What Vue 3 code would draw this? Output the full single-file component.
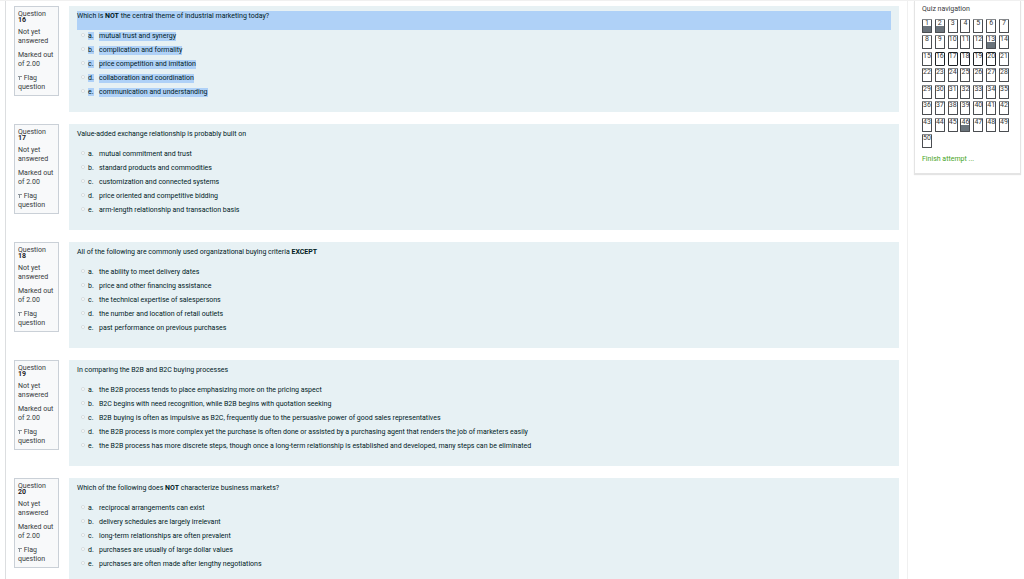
<script setup>
const questions = [
  {
    n: 16,
    selected: true,
    text: ['Which is ', 'NOT', ' the central theme of industrial marketing today?'],
    options: [
      'mutual trust and synergy',
      'complication and formality',
      'price competition and imitation',
      'collaboration and coordination',
      'communication and understanding'
    ]
  },
  {
    n: 17,
    text: ['Value-added exchange relationship is probably built on', '', ''],
    options: [
      'mutual commitment and trust',
      'standard products and commodities',
      'customization and connected systems',
      'price oriented and competitive bidding',
      'arm-length relationship and transaction basis'
    ]
  },
  {
    n: 18,
    text: ['All of the following are commonly used organizational buying criteria ', 'EXCEPT', ''],
    options: [
      'the ability to meet delivery dates',
      'price and other financing assistance',
      'the technical expertise of salespersons',
      'the number and location of retail outlets',
      'past performance on previous purchases'
    ]
  },
  {
    n: 19,
    text: ['In comparing the B2B and B2C buying processes', '', ''],
    options: [
      'the B2B process tends to place emphasizing more on the pricing aspect',
      'B2C begins with need recognition, while B2B begins with quotation seeking',
      'B2B buying is often as impulsive as B2C, frequently due to the persuasive power of good sales representatives',
      'the B2B process is more complex yet the purchase is often done or assisted by a purchasing agent that renders the job of marketers easily',
      'the B2B process has more discrete steps, though once a long-term relationship is established and developed, many steps can be eliminated'
    ]
  },
  {
    n: 20,
    text: ['Which of the following does ', 'NOT', ' characterize business markets?'],
    options: [
      'reciprocal arrangements can exist',
      'delivery schedules are largely irrelevant',
      'long-term relationships are often prevalent',
      'purchases are usually of large dollar values',
      'purchases are often made after lengthy negotiations'
    ]
  }
]
const answered = [1, 2, 13, 46]
const current = [16, 17, 18, 19, 20]
</script>

<template>
  <div class="page">
    <main class="main">
      <section v-for="q in questions" :key="q.n" class="question" :class="{ selected: q.selected }">
        <div class="info">
          <h3>Question <b>{{ q.n }}</b></h3>
          <p>Not yet answered</p>
          <p>Marked out of 2.00</p>
          <a href="#" class="flag">
            <svg viewBox="0 0 4 5" aria-hidden="true"><path d="M1.5 1v4M0 1.5h4" /></svg>
            Flag question
          </a>
        </div>
        <div class="content">
          <p :id="'q' + q.n" class="prompt">{{ q.text[0] }}<b>{{ q.text[1] }}</b>{{ q.text[2] }}</p>
          <div class="answers" role="radiogroup" :aria-labelledby="'q' + q.n">
            <label v-for="(o, i) in q.options" :key="i">
              <input type="radio" :name="'answer' + q.n" />
              <span class="letter"><span class="mark">{{ 'abcde'[i] }}.</span></span>
              <span class="mark">{{ o }}</span>
            </label>
          </div>
        </div>
      </section>
    </main>
    <aside class="nav">
      <h2>Quiz navigation</h2>
      <div class="grid">
        <button
          v-for="n in 50"
          :key="n"
          type="button"
          :class="{ done: answered.includes(n), current: current.includes(n) }"
        >{{ n }}</button>
      </div>
      <a href="#" class="finish">Finish attempt ...</a>
    </aside>
  </div>
</template>

<style>
body {
  margin: 0;
  background: #fff;
}
</style>

<style scoped>
.page {
  display: flex;
  align-items: flex-start;
  gap: 6px;
  height: 100vh;
  overflow: hidden;
  padding: 0 3px 0 5px;
  box-sizing: border-box;
  border-top: 1px solid #f0f0f0;
  font-family: Roboto, "Liberation Sans", sans-serif;
  font-size: 7px;
  line-height: 9px;
  color: #373a3c;
}
.main {
  flex: 1;
  display: flex;
  flex-direction: column;
  gap: 12px;
  padding: 5px 8px 12px;
  border: 1px solid #dcdee0;
  border-width: 0 1px;
  border-right-color: #f0f0f0;
}
.question {
  display: flex;
  align-items: flex-start;
  gap: 10px;
}
.info {
  box-sizing: border-box;
  width: 45px;
  height: 90px;
  padding: 4px 0 0 3px;
  border: 1px solid #cad0d7;
  background: #f8f9fa;
}
h2,
h3,
p {
  margin: 0;
  font-size: 7px;
  font-weight: 400;
}
.info h3 {
  line-height: 6px;
  margin-bottom: 5px;
}
.info b {
  display: block;
  color: #1d2125;
}
.info p {
  margin-bottom: 5px;
}
.flag {
  display: block;
  color: inherit;
  text-decoration: none;
}
.flag svg {
  width: 4px;
  height: 5px;
  fill: none;
  stroke: #8a9299;
}
.content {
  flex: 1;
  box-sizing: border-box;
  min-height: 106px;
  padding: 5px 8px;
  background: #e7f1f4;
  color: #001a1e;
}
.prompt {
  height: 19px;
  line-height: 11px;
}
.answers label {
  display: flex;
  align-items: center;
  box-sizing: border-box;
  height: 14px;
  padding-bottom: 2px;
}
.answers input {
  appearance: none;
  width: 4px;
  height: 4px;
  margin: 0 3px 2px 4px;
  border: 1px solid #d5dcdf;
  border-radius: 50%;
  background: #fff;
}
.letter {
  width: 11px;
}
.selected .prompt,
.selected .mark {
  background: #afd1f7;
}
.nav {
  box-sizing: border-box;
  width: 107px;
  padding: 4px 7px 9px;
  border: 1px solid #e4e4e4;
  border-top: 0;
  box-shadow: 0 1px 1px #e4e4e4;
}
.nav h2 {
  margin-bottom: 5px;
}
.grid {
  display: grid;
  grid-template-columns: repeat(7, 10px);
  grid-auto-rows: 14px;
  justify-content: space-between;
  align-content: space-between;
  width: 87px;
  height: 129px;
}
.grid button {
  padding: 0;
  border: 1px solid #4a4d51;
  border-top-color: #85888b;
  border-radius: 1px;
  background: #fff;
  color: #373a3c;
  font: inherit;
  line-height: 6px;
  display: flex;
  justify-content: center;
  align-items: flex-start;
}
.grid .done {
  background: linear-gradient(#fff 50%, #6a737b 50%);
}
.grid .current {
  border-color: #1d2125;
}
.finish {
  display: block;
  margin-top: 7px;
  color: #46a525;
  text-decoration: none;
}
</style>
